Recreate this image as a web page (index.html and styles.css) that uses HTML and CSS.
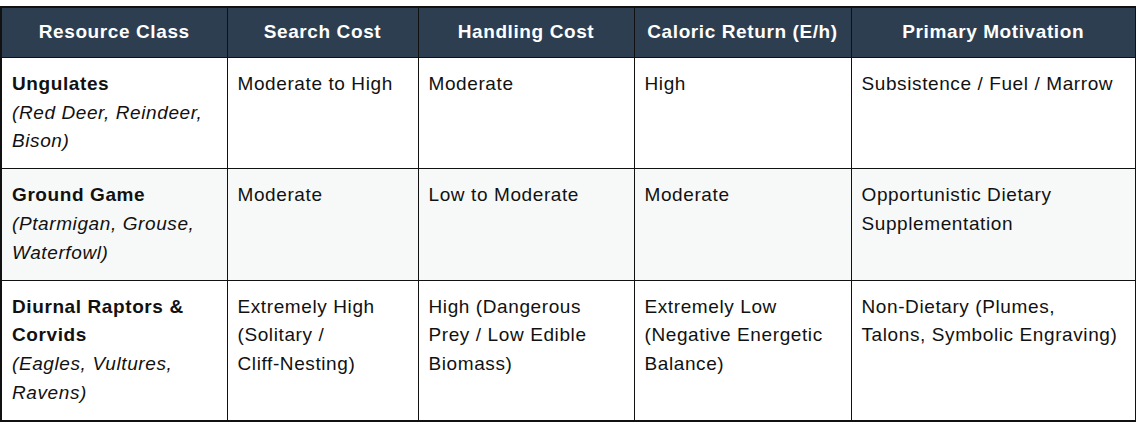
FILE: index.html
```html
<!DOCTYPE html>
<html lang="en">
<head>
<meta charset="utf-8">
<title>Resource Classes</title>
<link rel="stylesheet" href="styles.css">
</head>
<body>
<table class="grid">
  <colgroup>
    <col class="c1"><col class="c2"><col class="c3"><col class="c4"><col class="c5">
  </colgroup>
  <thead>
    <tr>
      <th>Resource Class</th>
      <th>Search Cost</th>
      <th>Handling Cost</th>
      <th>Caloric Return (E/h)</th>
      <th>Primary Motivation</th>
    </tr>
  </thead>
  <tbody>
    <tr>
      <td><strong class="name">Ungulates</strong><em class="sub">(Red Deer, Reindeer, Bison)</em></td>
      <td>Moderate to High</td>
      <td>Moderate</td>
      <td>High</td>
      <td>Subsistence / Fuel / Marrow</td>
    </tr>
    <tr class="alt">
      <td><strong class="name">Ground Game</strong><em class="sub">(Ptarmigan, Grouse, Waterfowl)</em></td>
      <td>Moderate</td>
      <td>Low to Moderate</td>
      <td>Moderate</td>
      <td>Opportunistic Dietary Supplementation</td>
    </tr>
    <tr>
      <td><strong class="name">Diurnal Raptors &amp; Corvids</strong><em class="sub">(Eagles, Vultures, Ravens)</em></td>
      <td>Extremely High (Solitary / <span class="nobr">Cliff-Nesting)</span></td>
      <td>High (Dangerous Prey / Low Edible Biomass)</td>
      <td>Extremely Low (Negative Energetic Balance)</td>
      <td>Non-Dietary (Plumes, Talons, Symbolic Engraving)</td>
    </tr>
  </tbody>
</table>
</body>
</html>
```

FILE: styles.css
```css
html, body {
  background: #ffffff;
}
body {
  margin: 6px 0 0 0;
  font-family: "Liberation Sans", Arial, Helvetica, sans-serif;
  font-size: 19px;
  letter-spacing: 0.6px;
  line-height: 28.8px;
  color: #111111;
}
.grid {
  width: 1135px;
  table-layout: fixed;
  border-collapse: collapse;
  border: 2px solid #111111;
}
.c1 { width: 226px; }
.c2 { width: 191px; }
.c3 { width: 216px; }
.c4 { width: 217px; }
.c5 { width: 285px; }
.grid th {
  background: #2c3e50;
  color: #ffffff;
  font-weight: bold;
  text-align: center;
  padding: 10px 8px;
  border: 1px solid #111111;
  white-space: nowrap;
}
.grid td {
  padding: 12px 10px;
  border: 1px solid #111111;
  vertical-align: top;
  text-align: left;
}
.grid tr.alt td {
  background: #f7f9f9;
}
.name {
  display: block;
  font-weight: bold;
}
.sub {
  display: block;
  font-style: italic;
}
.nobr {
  white-space: nowrap;
}
```
